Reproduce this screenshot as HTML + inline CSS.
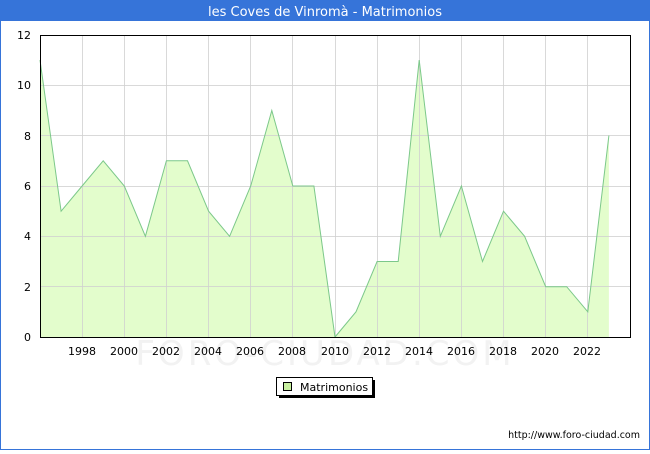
<!DOCTYPE html><html><head><style>body{margin:0;width:650px;height:450px;overflow:hidden;background:#fff;font-family:"DejaVu Sans","Liberation Sans",sans-serif}</style></head><body>
<svg width="650" height="450" xmlns="http://www.w3.org/2000/svg" font-family="DejaVu Sans, Liberation Sans, sans-serif">
<rect x="0.5" y="0.5" width="649" height="449" fill="#fff" stroke="#3674d9"/>
<rect x="0" y="0" width="650" height="21" fill="#3674d9"/>
<text x="325" y="16" font-size="13" fill="#fff" text-anchor="middle">les Coves de Vinromà - Matrimonios</text>
<text x="325" y="365" font-size="34" fill="#f2f2f2" text-anchor="middle" letter-spacing="3">FORO-CIUDAD.COM</text>
<polygon fill="#e3fdcc" stroke="none" points="40,60.1 61.1,211.2 82.1,186 103.2,160.8 124.3,186 145.4,236.3 166.4,160.8 187.5,160.8 208.6,211.2 229.6,236.3 250.7,186 271.8,110.5 292.8,186 313.9,186 335,337 356,311.8 377.1,261.5 398.2,261.5 419.2,60.1 440.3,236.3 461.4,186 482.5,261.5 503.5,211.2 524.6,236.3 545.7,286.7 566.7,286.7 587.8,311.8 608.9,135.6 608.9,337 40,337"/>
<g stroke="#d0d0d0" stroke-width="1" stroke-opacity="0.8">
<line x1="82.5" y1="35" x2="82.5" y2="337"/><line x1="124.5" y1="35" x2="124.5" y2="337"/><line x1="166.5" y1="35" x2="166.5" y2="337"/><line x1="208.5" y1="35" x2="208.5" y2="337"/><line x1="250.5" y1="35" x2="250.5" y2="337"/><line x1="292.5" y1="35" x2="292.5" y2="337"/><line x1="335.5" y1="35" x2="335.5" y2="337"/><line x1="377.5" y1="35" x2="377.5" y2="337"/><line x1="419.5" y1="35" x2="419.5" y2="337"/><line x1="461.5" y1="35" x2="461.5" y2="337"/><line x1="503.5" y1="35" x2="503.5" y2="337"/><line x1="545.5" y1="35" x2="545.5" y2="337"/><line x1="587.5" y1="35" x2="587.5" y2="337"/>
<line x1="40" y1="286.5" x2="630" y2="286.5"/><line x1="40" y1="236.5" x2="630" y2="236.5"/><line x1="40" y1="186.5" x2="630" y2="186.5"/><line x1="40" y1="135.5" x2="630" y2="135.5"/><line x1="40" y1="85.5" x2="630" y2="85.5"/>
</g>
<polyline fill="none" stroke="#7cc88a" stroke-width="1" points="40,60.1 61.1,211.2 82.1,186 103.2,160.8 124.3,186 145.4,236.3 166.4,160.8 187.5,160.8 208.6,211.2 229.6,236.3 250.7,186 271.8,110.5 292.8,186 313.9,186 335,337 356,311.8 377.1,261.5 398.2,261.5 419.2,60.1 440.3,236.3 461.4,186 482.5,261.5 503.5,211.2 524.6,236.3 545.7,286.7 566.7,286.7 587.8,311.8 608.9,135.6"/>
<rect x="40.5" y="35.5" width="590" height="302" fill="none" stroke="#000"/>
<g font-size="11" fill="#000" text-anchor="end">
<text x="31" y="341">0</text><text x="31" y="291">2</text><text x="31" y="240">4</text><text x="31" y="190">6</text><text x="31" y="140">8</text><text x="31" y="89">10</text><text x="31" y="39">12</text>
</g>
<g font-size="11" fill="#000" text-anchor="middle">
<text x="82" y="355">1998</text><text x="124" y="355">2000</text><text x="166" y="355">2002</text><text x="208" y="355">2004</text><text x="250" y="355">2006</text><text x="292" y="355">2008</text><text x="335" y="355">2010</text><text x="377" y="355">2012</text><text x="419" y="355">2014</text><text x="461" y="355">2016</text><text x="503" y="355">2018</text><text x="545" y="355">2020</text><text x="587" y="355">2022</text>
</g>
<rect x="279" y="380" width="96" height="18" fill="#000"/>
<rect x="276.5" y="377.5" width="96" height="18" fill="#fff" stroke="#000"/>
<rect x="283.5" y="382.5" width="8" height="8" fill="#c8f0a0" stroke="#000"/>
<text x="300" y="391" font-size="11">Matrimonios</text>
<text x="640" y="438" font-size="9.5" text-anchor="end">http://www.foro-ciudad.com</text>
</svg></body></html>
